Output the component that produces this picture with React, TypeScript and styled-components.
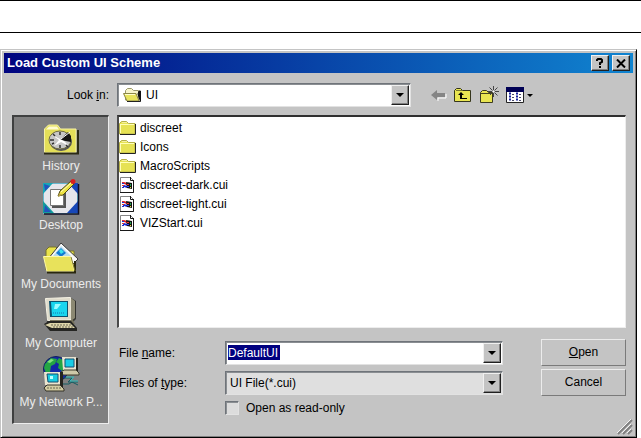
import React, { useState } from "react";
import styled, { createGlobalStyle, css } from "styled-components";

const GlobalStyle = createGlobalStyle`
  * { box-sizing: border-box; }
  body {
    margin: 0;
    background: #fff;
    color: #000;
    font: 12px/16px "Liberation Sans", Arial, sans-serif;
  }
  button, input, select { font: inherit; color: inherit; }
  svg { display: block; flex: none; }
`;

const sunken = css`
  border: 1px solid;
  border-color: #6f747a #e2e2e2 #e2e2e2 #6f747a;
  box-shadow: inset 1px 1px 0 #8a8e92;
`;

const raised = css`
  border: 1px solid;
  border-color: #f0f0f0 #202020 #202020 #f0f0f0;
  box-shadow: inset -1px -1px 0 #808080;
`;

const HeaderRule = styled.header`
  height: 33px;
  border-top: 1px solid #000;
  border-bottom: 1px solid #000;
`;

const Dialog = styled.section`
  position: relative;
  margin: 16px 4px 0 0;
  padding: 3px;
  background: #c4c4c4;
  border: 1px solid;
  border-color: #c4c4c4 #000 #000 #c4c4c4;
  box-shadow: inset 1px 1px 0 #fff, inset -1px -1px 0 #808080;
`;

const TitleBar = styled.div`
  display: flex;
  align-items: center;
  gap: 3px;
  height: 20px;
  padding: 0 3px;
  color: #fff;
  background: linear-gradient(90deg, #00047f, #1084d0);
`;

const Title = styled.h1`
  flex: 1;
  margin: 0;
  font-size: 13px;
  line-height: 20px;
  font-weight: bold;
  white-space: nowrap;
`;

const CaptionButton = styled.button`
  ${raised}
  display: grid;
  place-items: center;
  width: 18px;
  height: 16px;
  padding: 0;
  background: #c4c4c4;
`;

const Body = styled.div`
  display: grid;
  grid-template-columns: 97px minmax(0, 1fr);
  grid-template-rows: auto auto 1fr;
  column-gap: 8px;
  padding: 10px 7px 10px 8px;
`;

const LookLabel = styled.label`
  height: 32px;
  line-height: 24px;
  text-align: right;
`;

const LookRow = styled.div`
  display: flex;
  align-items: flex-start;
`;

const Combo = styled.div<{ $grow?: boolean; $shaded?: boolean }>`
  ${sunken}
  position: relative;
  display: flex;
  align-items: center;
  flex: ${(p) => (p.$grow ? "1 1 auto" : "0 1 294px")};
  min-width: 0;
  height: 24px;
  padding: 1px;
  background: ${(p) => (p.$shaded ? "#dfdfdf" : "#fff")};
`;

const comboField = css`
  flex: 1;
  min-width: 0;
  height: 18px;
  border: 0;
  outline: 0;
  background: transparent;
`;

const ComboSelect = styled.select`
  ${comboField}
  appearance: none;
  padding: 0 20px 0 3px;
`;

const ComboInput = styled.input`
  ${comboField}
  padding: 0;
`;

const NameField = styled.span`
  display: flex;
  flex: 1;
  min-width: 0;
  padding-left: 1px;
  input { background: linear-gradient(#000080, #000080) no-repeat 0 1px / 52px 15px; color: #fff; }
`;

const DropArrow = styled.span`
  ${raised}
  position: absolute;
  top: 1px;
  right: 1px;
  display: grid;
  place-items: center;
  width: 18px;
  height: 20px;
  background: #c4c4c4;
  pointer-events: none;
`;

const DropButton = styled.button`
  ${raised}
  display: grid;
  place-items: center;
  flex: none;
  width: 18px;
  height: 20px;
  padding: 0;
  background: #c4c4c4;
`;

const FolderSlot = styled.span`
  flex: none;
  padding-left: 4px;
`;

const Toolbar = styled.div`
  display: flex;
  gap: 7px;
  padding: 2px 0 0 20px;
`;

const ToolButton = styled.button`
  display: grid;
  place-items: center;
  height: 20px;
  padding: 0;
  border: 0;
  background: none;
`;

const Places = styled.nav`
  display: flex;
  flex-direction: column;
  grid-row: 2 / 4;
  height: 309px;
  padding: 3px 0 0;
  background: #808080;
  border: solid;
  border-width: 2px 1px 1px 2px;
  border-color: #3f4040 #ededed #ededed #3f4040;
`;

const Place = styled.a`
  display: flex;
  flex-direction: column;
  align-items: center;
  gap: 2px;
  height: 59px;
  color: #ececec;
  text-decoration: none;
  white-space: nowrap;
`;

const FileList = styled.ul`
  height: 213px;
  margin: 0;
  padding: 1px 0 0;
  list-style: none;
  background: #fff;
  border: solid;
  border-width: 2px 1px 1px 2px;
  border-color: #303030 #ededed #ededed #4a4a4a;
`;

const FileRow = styled.li`
  display: flex;
  align-items: center;
  gap: 3px;
  height: 19px;
  white-space: nowrap;
`;

const Form = styled.form`
  display: grid;
  grid-template-columns: 108px minmax(0, 1fr) 85px;
  grid-template-rows: 27px 27px 18px;
  row-gap: 3px;
  align-items: center;
  align-content: start;
  padding-top: 11px;
`;

const FieldLabel = styled.label`
  padding-left: 2px;
  white-space: nowrap;
`;

const FieldSlot = styled.div`
  display: flex;
  padding-right: 38px;
`;

const CommandButton = styled.button`
  height: 27px;
  padding: 0 0 2px;
  background: #c4c4c4;
  border: 1px solid;
  border-color: #ececec #7a7a7a #7a7a7a #ececec;
`;

const CheckLabel = styled.label`
  grid-column: 2 / 4;
  display: flex;
  align-items: center;
  gap: 7px;
`;

const CheckBox = styled.input`
  ${sunken}
  appearance: none;
  width: 14px;
  height: 14px;
  margin: 0;
  background: #dcdcdc;
`;

const Grip = styled.svg`
  position: absolute;
  right: 3px;
  bottom: 2px;
`;

const Caret = () => (
  <svg width="8" height="4" viewBox="0 0 8 4" aria-hidden="true">
    <path d="M0 0h8L4 4z" fill="#000" />
  </svg>
);

const Folder = () => (
  <svg width="18" height="16" viewBox="0 0 18 16" aria-hidden="true">
    <path d="M.5 14V3.500l2-2h5l2 2h6.500V14z" fill="#e6e254" stroke="#b4b04a" />
    <path d="M1 4.500h14M1.500 4v9" fill="none" stroke="#ffffb8" />
    <path d="M3 2.500h5" stroke="#f5f0a0" />
    <path d="M1 14.500h15.500V4" fill="none" stroke="#222" />
  </svg>
);

const OpenFolder = () => (
  <svg width="20" height="16" viewBox="0 0 20 16" aria-hidden="true">
    <path d="M2.500 13V3.500l2-2h4l2 2h5V14z" fill="#f7f5cb" stroke="#99966a" />
    <path d="M16 4h1.500v10.500L15 7z" fill="#111" stroke="#111" />
    <path d="M.5 6.500h12.500l3 7.500H4z" fill="#e8e45c" stroke="#8b8748" />
    <path d="M2 7.500h10" stroke="#ffffcc" />
    <path d="M4 14.500h13" stroke="#222" />
  </svg>
);

const CuiFile = () => (
  <svg width="18" height="18" viewBox="0 0 18 18" aria-hidden="true">
    <path d="M1.500 1.500h10l3 3v12h-13z" fill="#fff" stroke="#858585" />
    <path d="M1 16.500h13.500V4.500M11.500 1v3.500H15" fill="none" stroke="#181818" />
    <path d="M3 6h2v1H3zm0 3h2v1H3z" fill="#e03030" />
    <path d="M3 7h2v1H3zm1 3h2v1H4zm-1 1h2v1H3z" fill="#2030c8" />
    <path d="M5 6l3 1v2L5 8z" fill="#e02020" />
    <path d="M5 9l3 1v2l-3-1z" fill="#1728d8" />
    <path d="M7 6l6 1v6l-5-1z" fill="#111" />
    <path d="M8 8h2v1H8z" fill="#f02828" />
    <path d="M11 8h1v2h-1z" fill="#20a050" />
    <path d="M8 10h2v1H8z" fill="#3040ff" />
    <path d="M11 11h1v1h-1z" fill="#e8d830" />
  </svg>
);

const BackIcon = () => (
  <svg width="16" height="12" viewBox="0 0 16 12" aria-hidden="true">
    <path d="M7 12V9h8V5" fill="none" stroke="#fff" strokeWidth="1" />
    <path d="M0 6l6-5v3h8v4H6v3z" fill="#858585" />
  </svg>
);

const UpIcon = () => (
  <svg width="18" height="16" viewBox="0 0 18 16" aria-hidden="true">
    <path d="M.5 14.500V3.500l2-2h4l2 2h8v11z" fill="#e9e552" stroke="#35351c" />
    <path d="M2 3.500h6" stroke="#77752e" />
    <path d="M4 8l3-3 3 3H8v3h5v1H6V8z" fill="#000" />
  </svg>
);

const NewFolderIcon = () => (
  <svg width="20" height="18" viewBox="0 0 20 18" aria-hidden="true">
    <path d="M1.500 16.500v-10l2-2h4l2 2h4v10z" fill="#e9e552" stroke="#3c3b20" />
    <path d="M2 7.500h11" stroke="#45431f" />
    <path d="M14.500 0v4M14.500 7v4M9 5.500h4M16 5.500h4M10.500 1.500l3 3M18.500 1.500l-3 3M18.500 9.500l-3-3M11 9l2.500-2.500" stroke="#454545" fill="none" />
    <path d="M14 5h1v1h-1z" fill="#fff" />
  </svg>
);

const ViewsIcon = () => (
  <svg width="28" height="16" viewBox="0 0 28 16" aria-hidden="true">
    <path d="M.5.5h17v15H.5z" fill="#fff" stroke="#222" />
    <path d="M0 0h18v5H0z" fill="#000054" />
    <path d="M3 6.500h2M3 9.500h2M3 12.500h2M10 6.500h2M10 9.500h2M10 12.500h2" stroke="#1622a0" strokeWidth="2" />
    <path d="M6 7.500h2M6 10.500h2M6 13.500h2M13 7.500h2M13 10.500h2M13 13.500h2" stroke="#484868" />
    <path d="M21 7h6l-3 3z" fill="#000" />
  </svg>
);

const HistoryIcon = () => (
  <svg width="36" height="32" viewBox="0 0 36 32" aria-hidden="true">
    <path d="M1.500 28.500V5l4-4h9l3 4h15.500v23.500z" fill="#e4df58" stroke="#f6f1a2" />
    <path d="M6 2.500h8l2 3H3z" fill="#fffbd0" />
    <path d="M1 29.500h34V6" fill="none" stroke="#2b2a16" strokeWidth="2" />
    <ellipse cx="18" cy="18" rx="11" ry="9" fill="#555" />
    <ellipse cx="17" cy="16" rx="11" ry="9" fill="#c7c7c7" stroke="#6e6b42" />
    <path d="M17 16L25 8l3 4v6z" fill="#151515" />
    <path d="M9 11l7 5-5 6 7-4 8 4-5-5z" fill="#fff" />
    <path d="M17 8v3M7 16h4M17 21v3M23 21l2 2M9 20l2-1M10 10l2 2" stroke="#333" strokeWidth="1.500" />
    <path d="M18 15l9-7" stroke="#fff" />
  </svg>
);

const DesktopIcon = () => (
  <svg width="38" height="36" viewBox="0 0 38 36" aria-hidden="true">
    <path d="M1.500 4.500h34v30h-34z" fill="#e6e6ec" stroke="#68b8cf" />
    <path d="M1 4h10L1 15z" fill="#16a7b6" />
    <path d="M1 34V22l11 12z" fill="#129e9c" />
    <path d="M36 4H26l10 11z" fill="#1747b8" />
    <path d="M36 34V22L25 34z" fill="#1747b8" />
    <path d="M2 5l6 2-5 5zM2 33l1-7 6 7z" fill="#2254be" />
    <path d="M2 35h34.500V5" fill="none" stroke="#101028" strokeWidth="1.500" />
    <path d="M10 12h14v17H10z" fill="#555" />
    <path d="M8.500 10.500h13v16h-13z" fill="#fff" stroke="#777" />
    <path d="M16 17l2-5L29 2l3 3-11 11z" fill="#eee342" stroke="#4a4518" />
    <path d="M17 14l3 2-4 2z" fill="#b9a444" />
    <path d="M19 13L29 4" stroke="#ffffc0" />
    <circle cx="31" cy="2.500" r="2.500" fill="#d82020" />
  </svg>
);

const DocumentsIcon = () => (
  <svg width="38" height="32" viewBox="0 0 38 32" aria-hidden="true">
    <path d="M4 8l3-3h7l3 4h15v19H4z" fill="#e9e24a" stroke="#77722a" />
    <path d="M6 17L19 1l17 16-5 5z" fill="#f8f8f8" stroke="#3a3a3a" />
    <path d="M11 14l8-10 10 10z" fill="#b8dbef" />
    <path d="M14 11l5-5 5 5-5 4z" fill="#127ad1" />
    <path d="M17 9l2-2 3 3-3 2z" fill="#38e3ec" />
    <path d="M1.500 14.500h27l4 15H5z" fill="#e8e25b" stroke="#fff8a4" />
    <path d="M5 30.500h28V19" fill="none" stroke="#29270f" strokeWidth="2" />
    <path d="M29 15l4 14" stroke="#807b2a" />
  </svg>
);

const ComputerIcon = () => (
  <svg width="36" height="36" viewBox="0 0 36 36" aria-hidden="true">
    <path d="M3 1h25l5 3v18l-4 4H4z" fill="#343430" />
    <path d="M2.500 1.500l25-1 1 22-24 1z" fill="#dedbcb" stroke="#f7f4e7" />
    <path d="M28 1l4 3v17l-4 3z" fill="#8b8872" />
    <path d="M6 4h19v16H7z" fill="#0c526f" />
    <path d="M8 5h16v14H9z" fill="#18d5ee" />
    <path d="M12 7h6l-4 5h-3z" fill="#9dfbff" />
    <path d="M10 16h12" stroke="#17a5ce" strokeWidth="2" strokeDasharray="1 1" />
    <path d="M7 23h23l2 4H7z" fill="#77735c" />
    <path d="M1 27l5-3h22l6 7v3H7z" fill="#252522" />
    <path d="M2 28l5-2h20l5 5H9z" fill="#ded6aa" />
    <path d="M8 28h20M10 30h20" stroke="#6e6b57" strokeDasharray="2 1" />
  </svg>
);

const NetworkIcon = () => (
  <svg width="38" height="36" viewBox="0 0 38 36" aria-hidden="true">
    <circle cx="14" cy="13" r="12.500" fill="#1327a6" stroke="#102058" />
    <path d="M3 8l6-6 6 1-2 5-4 2-1 6-4 1-2-5zM17 2l6 3 2 6-5 4-4-3 1-4-3-2z" fill="#24a544" />
    <path d="M5 6l4-3 3 1-4 3z" fill="#82e27c" />
    <path d="M21 2h15v15H22z" fill="#24231e" />
    <path d="M20 1h14v13H21z" fill="#e8e3cf" />
    <path d="M23 3h9v8h-9z" fill="#18cde5" stroke="#154e74" />
    <path d="M19 16l3-2h12l3 3v2H21z" fill="#cec8a8" stroke="#3d3b2d" />
    <path d="M3 16h18v15H4z" fill="#25241f" />
    <path d="M2 16h16v13H3z" fill="#ebe5cf" />
    <path d="M5 18h11v8H6z" fill="#18cbe1" stroke="#134f70" />
    <path d="M8 20h3v3H8z" fill="#baffff" />
    <path d="M2 32l3-3h13l4 4v2H4z" fill="#d3cca2" stroke="#353329" />
    <path d="M5 32h14" stroke="#6d6852" strokeDasharray="2 1" />
    <path d="M22 22h8l-4 4h10M21 28h6l3-2 6 3" fill="none" stroke="#155c62" />
    <path d="M24 21h8l-4 4h8" fill="none" stroke="#32bcbb" />
  </svg>
);

const places = [
  { name: "History", Icon: HistoryIcon },
  { name: "Desktop", Icon: DesktopIcon },
  { name: "My Documents", Icon: DocumentsIcon },
  { name: "My Computer", Icon: ComputerIcon },
  { name: "My Network P...", Icon: NetworkIcon },
];

const PlaceIcon = styled.span`
  display: flex;
  align-items: flex-end;
  height: 36px;
`;

const files = [
  { name: "discreet", folder: true },
  { name: "Icons", folder: true },
  { name: "MacroScripts", folder: true },
  { name: "discreet-dark.cui", folder: false },
  { name: "discreet-light.cui", folder: false },
  { name: "VIZStart.cui", folder: false },
];

export default function App() {
  const [fileName, setFileName] = useState("DefaultUI");
  return (
    <>
      <GlobalStyle />
      <HeaderRule />
      <Dialog role="dialog" aria-labelledby="dialog-title">
        <TitleBar>
          <Title id="dialog-title">Load Custom UI Scheme</Title>
          <CaptionButton aria-label="Help">
            <svg width="8" height="10" viewBox="0 0 8 10">
              <path d="M1 3V2l1-1h3l1 1v2L4 5v2M4 8v2" fill="none" stroke="#000" strokeWidth="2" />
            </svg>
          </CaptionButton>
          <CaptionButton aria-label="Close">
            <svg width="10" height="9" viewBox="0 0 10 9">
              <path d="M1 .5l8 8M9 .5l-8 8" stroke="#000" strokeWidth="2" />
            </svg>
          </CaptionButton>
        </TitleBar>
        <Body>
          <LookLabel htmlFor="look-in">Look <u>i</u>n:</LookLabel>
          <LookRow>
            <Combo>
              <FolderSlot><OpenFolder /></FolderSlot>
              <ComboSelect id="look-in"><option>UI</option></ComboSelect>
              <DropArrow><Caret /></DropArrow>
            </Combo>
            <Toolbar>
              <ToolButton aria-label="Back"><BackIcon /></ToolButton>
              <ToolButton aria-label="Up one level"><UpIcon /></ToolButton>
              <ToolButton aria-label="New folder"><NewFolderIcon /></ToolButton>
              <ToolButton aria-label="Views"><ViewsIcon /></ToolButton>
            </Toolbar>
          </LookRow>
          <Places>
            {places.map(({ name, Icon }) => (
              <Place href="#" key={name}>
                <PlaceIcon><Icon /></PlaceIcon>
                {name}
              </Place>
            ))}
          </Places>
          <FileList>
            {files.map((f) => (
              <FileRow key={f.name}>
                {f.folder ? <Folder /> : <CuiFile />}
                {f.name}
              </FileRow>
            ))}
          </FileList>
          <Form onSubmit={(e) => e.preventDefault()}>
            <FieldLabel htmlFor="file-name">File <u>n</u>ame:</FieldLabel>
            <FieldSlot>
              <Combo $grow>
                <NameField>
                  <ComboInput id="file-name" value={fileName} onChange={(e) => setFileName(e.target.value)} />
                </NameField>
                <DropButton type="button" aria-label="Recent file names"><Caret /></DropButton>
              </Combo>
            </FieldSlot>
            <CommandButton type="submit"><u>O</u>pen</CommandButton>
            <FieldLabel htmlFor="file-type">Files of <u>t</u>ype:</FieldLabel>
            <FieldSlot>
              <Combo $grow $shaded>
                <ComboSelect id="file-type"><option>UI File(*.cui)</option></ComboSelect>
                <DropArrow><Caret /></DropArrow>
              </Combo>
            </FieldSlot>
            <CommandButton type="button">Cancel</CommandButton>
            <CheckLabel>
              <CheckBox type="checkbox" />
              Open as read-only
            </CheckLabel>
          </Form>
        </Body>
        <Grip width="18" height="18" viewBox="0 0 18 18" aria-hidden="true">
          <path d="M3 17L17 3M8 17l9-9M13 17l4-4" stroke="#808080" strokeWidth="2" />
          <path d="M2 16L16 2M7 16l9-9M12 16l4-4" stroke="#f4f4f4" />
        </Grip>
      </Dialog>
    </>
  );
}
